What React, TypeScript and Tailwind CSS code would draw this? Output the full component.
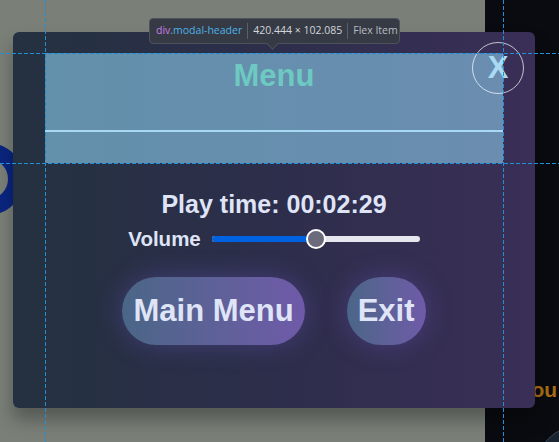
import React from "react";

const sans = { fontFamily: '"Liberation Sans", Arial, sans-serif' };

function GuideLines() {
  // devtools highlight guides around the inspected header
  return (
    <svg className="absolute inset-0 pointer-events-none" width={559} height={442}>
      <g stroke="#1f8fd8" strokeWidth={1} strokeDasharray="4 2">
        <line x1={45.5} y1={0} x2={45.5} y2={442} />
        <line x1={503.5} y1={0} x2={503.5} y2={442} />
        <line x1={0} y1={53.5} x2={559} y2={53.5} />
        <line x1={0} y1={163.5} x2={559} y2={163.5} />
      </g>
    </svg>
  );
}

function InspectTooltip() {
  return (
    <div
      className="absolute left-[149px] top-[18px] h-[26px] w-[251px] flex items-center whitespace-nowrap rounded-[4px] border border-[#4d535d] bg-[#353a44] px-[6px] text-[10.5px]"
      style={{ fontFamily: '"Open Sans", "Noto Sans", sans-serif' }}
    >
      <span className="text-[#c97fe4]">div</span>
      <span className="text-[#4fb2ea]">.modal-header</span>
      <span className="mx-[5px] h-[16px] w-px shrink-0 bg-[#5a6069]" />
      <span className="text-[#d3d6db]">420.444 × 102.085</span>
      <span className="mx-[5px] h-[16px] w-px shrink-0 bg-[#5a6069]" />
      <span className="text-[#b9bcc2]">Flex Item</span>
      <div className="absolute left-[118px] -bottom-[5px] h-[9px] w-[9px] rotate-45 border-b border-r border-[#4d535d] bg-[#353a44]" />
    </div>
  );
}

function VolumeSlider({ value }: { value: number }) {
  const width = 208;
  const pos = Math.round(width * value);
  return (
    <div className="relative h-[6px] w-[208px] rounded-full bg-[#e6e6ee]">
      <div className="h-full rounded-full bg-[#0062e0]" style={{ width: pos }} />
      <div
        className="absolute top-[-7px] h-[20px] w-[20px] rounded-full border-2 border-white bg-[#6b6b7b]"
        style={{ left: pos - 10 }}
      />
    </div>
  );
}

export default function App() {
  return (
    <div className="relative h-[442px] w-[559px] overflow-hidden" style={sans}>
      {/* game scene behind the modal */}
      <div className="flex h-full w-full">
        <div className="relative flex-1 bg-[#7a7f78]">
          <svg className="absolute left-0 top-0" width={40} height={260}>
            <circle cx={-12} cy={179} r={28} fill="none" stroke="#0b2580" strokeWidth={16} />
          </svg>
        </div>
        <div className="relative w-[74px] bg-[#0a0b10]">
          <span className="absolute left-[34px] top-[374px] text-[21px] font-bold text-[#a86b12]">You</span>
          <div className="absolute left-[50px] top-[425px] h-[90px] w-[90px] rounded-full border border-[#34475a] bg-[#1a2330]" />
        </div>
      </div>

      {/* modal */}
      <div className="absolute left-[13px] top-[32px] flex h-[376px] w-[522px] flex-col rounded-[6px] bg-gradient-to-r from-[#243140] via-[#2d2e4b] to-[#3a2f57] px-[32px] pt-[21px] shadow-[0_12px_18px_rgba(0,0,0,0.3)]">
        <div className="flex h-[110px] flex-col items-center bg-gradient-to-r from-[#6390ab] to-[#6a8db0] pt-[6px]">
          <h2 className="text-[31px] font-bold leading-[34px] text-[#6dc9c1]">Menu</h2>
          <div className="mt-[37px] h-[2px] w-full bg-[#a7d9f3]" />
        </div>

        <button className="absolute left-[459px] top-[10px] flex h-[52px] w-[52px] items-center justify-center rounded-full border border-white/70 text-[31px] font-bold text-[#a9daf1]">
          X
        </button>

        <div className="flex flex-col items-center text-[#dfe4f7]">
          <p className="mt-[27px] text-[25px] font-bold leading-[28px]">Play time: 00:02:29</p>
          <div className="mt-[11px] flex h-[20px] items-center gap-[11px]">
            <span className="text-[20.5px] font-bold">Volume</span>
            <VolumeSlider value={0.5} />
          </div>
          <div className="mt-[28px] flex gap-[42px]">
            <button className="h-[68px] rounded-full bg-gradient-to-r from-[#4a6687] to-[#6f5aa9] px-[11px] text-[31px] font-bold text-[#dfe4f7] shadow-[0_0_26px_rgba(112,88,210,0.35)]">
              Main Menu
            </button>
            <button className="h-[68px] rounded-full bg-gradient-to-r from-[#4a6687] to-[#6f5aa9] px-[11px] text-[31px] font-bold text-[#dfe4f7] shadow-[0_0_26px_rgba(112,88,210,0.35)]">
              Exit
            </button>
          </div>
        </div>
      </div>

      <GuideLines />
      <InspectTooltip />
    </div>
  );
}
